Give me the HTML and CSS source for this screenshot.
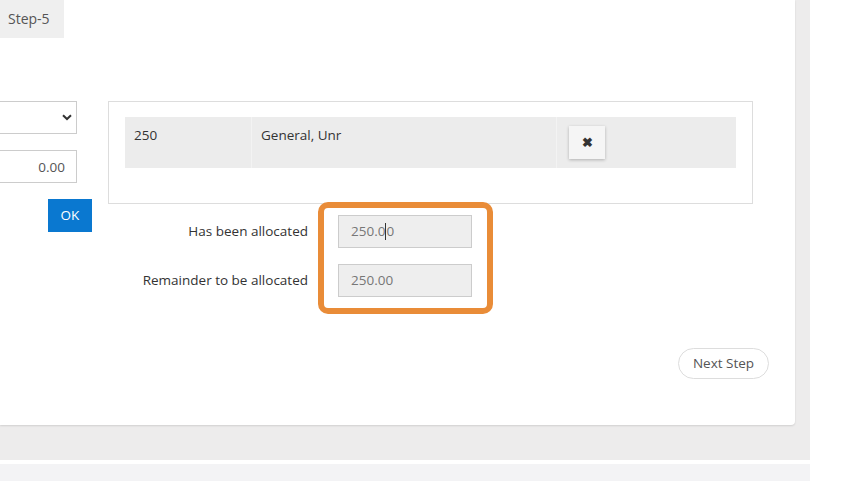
FILE: index.html
```html
<!DOCTYPE html>
<html>
<head>
<meta charset="utf-8">
<title>Allocation - Step 5</title>
<link rel="stylesheet" href="styles.css">
</head>
<body>
<div class="frame">
  <div class="card">
    <div class="tabs">
      <div class="tab">Step-5</div>
    </div>

    <div class="split">
      <div class="entry">
        <div class="select-box">
          <svg class="chevron" width="10" height="7" viewBox="0 0 10 7"><path d="M1 1.2 L5 5 L9 1.2" fill="none" stroke="#333" stroke-width="2"/></svg>
        </div>
        <div class="amount">0.00</div>
        <div class="btn-ok">OK</div>
      </div>

      <div class="lines">
        <div class="line-box">
          <div class="line-row">
            <div class="cell cell-code">250</div>
            <div class="cell cell-name">General, Unr</div>
            <div class="cell cell-act"><span class="btn-del">&#10006;</span></div>
          </div>
        </div>

        <div class="totals">
          <div class="label">Has been allocated</div>
          <div class="field">250.0<span class="caret"></span>0</div>
          <div class="label">Remainder to be allocated</div>
          <div class="field">250.00</div>
          <div class="highlight"></div>
        </div>
      </div>
    </div>

    <div class="actions">
      <div class="btn-next">Next Step</div>
    </div>
  </div>
</div>
<div class="footer-band"></div>
</body>
</html>
```

FILE: styles.css
```css
body {
 margin:0;
 background:#fff;
 font-family:"Open Sans","Liberation Sans",Arial,sans-serif;
 font-size:13.5px;
 color:#333;
}

.frame {
 width:795px;
 height:460px;
 padding-right:15px;
 background:#edecec;
}

.card {
 height:425px;
 background:#fff;
 border-radius:0 0 4px 0;
 box-shadow:0 1px 2px rgba(0,0,0,.12);
}

.tabs { display:flex; }
.tab {
 width:64px;
 height:38px;
 box-sizing:border-box;
 padding:9px 0 0 8px;
 background:#efefef;
 color:#555;
 font-size:14px;
}

.split {
 display:flex;
 gap:16px;
 margin-top:63px;
 margin-left:-108px;
}

/* left column, partly scrolled out of view */
.entry {
 width:200px;
 display:flex;
 flex-direction:column;
}
.select-box, .amount {
 width:185px;
 height:33px;
 box-sizing:border-box;
 border:1px solid #ccc;
 background:#fff;
}
.select-box {
 display:flex;
 align-items:center;
 justify-content:flex-end;
 padding-right:4px;
}
.amount {
 margin-top:16px;
 text-align:right;
 padding:7px 11px 0 0;
 color:#555;
}
.btn-ok {
 align-self:flex-end;
 margin-top:16px;
 width:44px;
 height:33px;
 line-height:33px;
 text-align:center;
 background:#0a78d0;
 color:#fff;
}

.line-box {
 width:645px;
 height:103px;
 box-sizing:border-box;
 border:1px solid #ddd;
 padding:15px 16px;
}
.line-row {
 display:flex;
 height:51px;
 background:#ececec;
}
.cell {
 padding:9px 9px 0 9px;
 box-sizing:border-box;
}
.cell-code { width:126px; }
.cell-name { width:305px; border-left:1px solid #f3f3f3; }
.cell-act { flex:1; border-left:1px solid #f3f3f3; padding-left:12px; }
.btn-del {
 display:block;
 width:36px;
 height:33px;
 line-height:33px;
 text-align:center;
 font-size:13px;
 font-weight:bold;
 color:#333;
 background:#f5f5f5;
 box-shadow:0 1px 3px rgba(0,0,0,.25);
}

.totals {
 position:relative;
 display:grid;
 grid-template-columns:200px 134px;
 column-gap:30px;
 row-gap:16px;
 margin-top:11px;
}
.label {
 text-align:right;
 line-height:33px;
}
.field {
 height:33px;
 box-sizing:border-box;
 border:1px solid #ccc;
 background:#eee;
 color:#777;
 padding:6px 12px 0;
}
.caret {
 display:inline-block;
 width:1px;
 height:17px;
 background:#333;
 vertical-align:-4px;
}
.highlight {
 position:absolute;
 left:210px;
 top:-13px;
 width:175px;
 height:112px;
 box-sizing:border-box;
 border:6px solid #e98c38;
 border-radius:10px;
}

.actions {
 display:flex;
 justify-content:flex-end;
 margin-top:51px;
 padding-right:26px;
}
.btn-next {
 width:91px;
 height:31px;
 box-sizing:border-box;
 border:1px solid #ddd;
 border-radius:16px;
 line-height:29px;
 text-align:center;
 color:#555;
}

.footer-band {
 width:810px;
 height:17px;
 margin-top:4px;
 background:#f3f3f5;
}
```
